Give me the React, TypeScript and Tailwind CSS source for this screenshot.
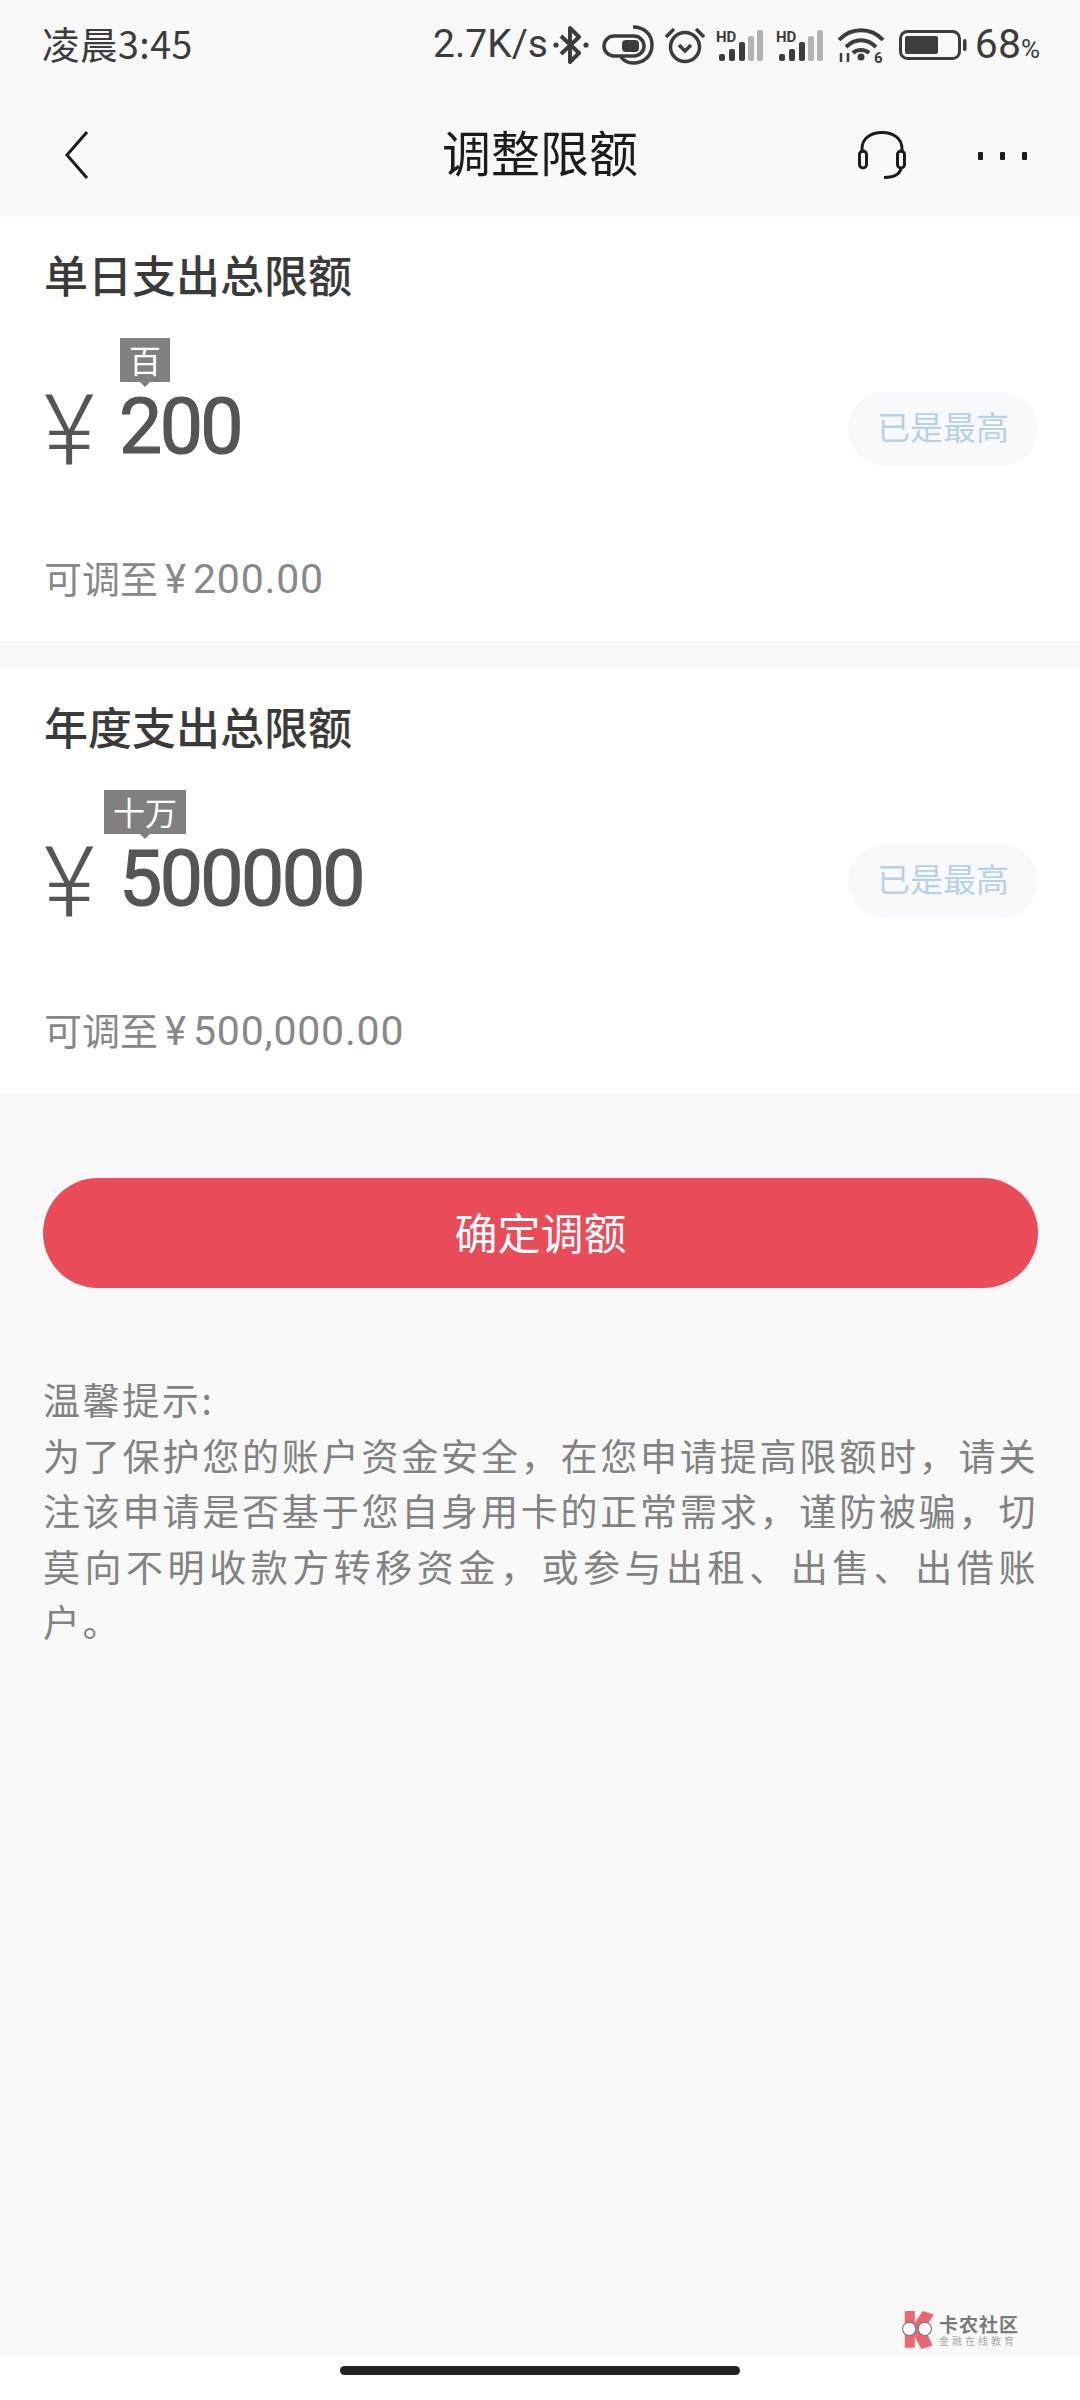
function Signal() {
  return (
    <svg width="50" height="32" viewBox="0 0 50 32" className="shrink-0">
      <text x="1" y="13" fontSize="15" fontWeight="700" fontFamily="Roboto, sans-serif" fill="#3c3c3c">HD</text>
      <rect x="4" y="25" width="6" height="7" rx="2" fill="#3c3c3c" />
      <rect x="14" y="20" width="6" height="12" rx="2" fill="#3c3c3c" />
      <rect x="24" y="13" width="6" height="19" rx="2" fill="#3c3c3c" />
      <rect x="33" y="7" width="6" height="25" rx="2" fill="#b3b3b3" />
      <rect x="42" y="1" width="6" height="31" rx="2" fill="#b3b3b3" />
    </svg>
  );
}

function StatusBar() {
  return (
    <div className="flex h-[90px] items-center justify-between pl-[42px] pr-[40px] text-[#3c3c3c]">
      <span className="mb-[5px] text-[37.5px] leading-none tracking-[0.5px]">凌晨3:45</span>
      <div className="flex items-center">
        <span className="mb-[2px] font-['Roboto',sans-serif] text-[39px] leading-none">2.7K/s</span>
        <svg width="36" height="38" viewBox="0 0 36 38" className="ml-[5px]" fill="none" stroke="#3c3c3c" strokeWidth="4">
          <path d="M8 10 L26 27 L17 36 V2 L26 11 L8 28" strokeLinejoin="round" />
          <circle cx="3" cy="19" r="2.6" fill="#3c3c3c" stroke="none" />
          <circle cx="33" cy="19" r="2.6" fill="#3c3c3c" stroke="none" />
        </svg>
        <svg width="52" height="40" viewBox="0 0 52 40" className="ml-[13px]" fill="none" stroke="#3c3c3c" strokeWidth="3.5">
          <rect x="2" y="11" width="40" height="20" rx="10" />
          <rect x="20" y="15" width="17" height="12" rx="4" fill="#3c3c3c" stroke="none" />
          <path d="M31 2 C43 2 50 10 50 20 C50 30 43 38 31 38 C26 38 22 36 19 32" />
        </svg>
        <svg width="42" height="38" viewBox="0 0 42 38" className="ml-[10px]" fill="none" stroke="#3c3c3c" strokeWidth="3.5">
          <circle cx="21" cy="21" r="14.5" />
          <path d="M15 19 L21 25 L27 19" />
          <path d="M2 11 L10 3 M40 11 L32 3" />
        </svg>
        <div className="ml-[9px] flex gap-[10px]">
          <Signal />
          <Signal />
        </div>
        <svg width="48" height="36" viewBox="0 0 48 36" className="ml-[12px]" fill="none" stroke="#3c3c3c" strokeWidth="4">
          <path d="M2 13 C14 0 34 0 46 13" />
          <path d="M9 20 C18 11 30 11 39 20" />
          <path d="M16 26 C20 22 28 22 32 26" />
          <circle cx="24" cy="30" r="3.5" fill="#3c3c3c" stroke="none" />
          <path d="M4 26 V35 M11 26 V35" strokeWidth="2.5" />
          <text x="37" y="36" fontSize="15" fontWeight="700" fontFamily="Roboto, sans-serif" fill="#3c3c3c" stroke="none">6</text>
        </svg>
        <svg width="68" height="30" viewBox="0 0 68 30" className="ml-[14px]" fill="none">
          <rect x="1.5" y="1.5" width="59" height="27" rx="7" stroke="#3c3c3c" strokeWidth="3" />
          <rect x="6" y="6" width="33" height="18" rx="2" fill="#3c3c3c" />
          <rect x="64" y="9" width="3.5" height="12" rx="1.7" fill="#3c3c3c" />
        </svg>
        <span className="mb-[2px] ml-[8px] font-['Roboto',sans-serif] text-[41px] leading-none">
          68<span className="text-[26px]">%</span>
        </span>
      </div>
    </div>
  );
}

function Header() {
  return (
    <div className="flex h-[127px] items-center justify-between pl-[64px] pr-[53px]">
      <svg width="26" height="52" viewBox="0 0 26 52" className="mt-[2px]" fill="none" stroke="#1c1c1c" strokeWidth="3">
        <path d="M23 3 L3 26 L23 49" />
      </svg>
      <span className="absolute left-0 right-0 mb-[6px] text-center text-[49px] leading-none text-[#1c1c1c]">调整限额</span>
      <div className="flex items-center gap-[72px]">
        <svg width="48" height="48" viewBox="0 0 48 48" className="mt-[2px]" fill="none" stroke="#1c1c1c" strokeWidth="3">
          <path d="M4 22 V18 C4 7 13 1.5 24 1.5 C35 1.5 44 7 44 18 V22" />
          <rect x="1.5" y="20" width="7" height="17" rx="3.5" />
          <rect x="39.5" y="20" width="7" height="17" rx="3.5" />
          <path d="M43 37 C42 43 36 46.5 26 46.5" />
        </svg>
        <div className="mt-[4px] flex gap-[17px]">
          <div className="h-[8px] w-[5px] rounded-[1px] bg-[#1c1c1c]" />
          <div className="h-[8px] w-[5px] rounded-[1px] bg-[#1c1c1c]" />
          <div className="h-[8px] w-[5px] rounded-[1px] bg-[#1c1c1c]" />
        </div>
      </div>
    </div>
  );
}

function LimitCard({ title, unit, unitW, amount, hint }: { title: string; unit: string; unitW: string; amount: string; hint: string }) {
  return (
    <section className="h-[424px] bg-white pl-[44px] pr-[42px] pt-[27px]">
      <h2 className="h-[60px] text-[44px] font-medium leading-[60px] text-[#3a3a3a]">{title}</h2>
      <div className="relative mt-[88px] flex h-[74px] items-center justify-between">
        <div
          className={`absolute left-[101px] top-[-54px] flex h-[44px] -translate-x-1/2 items-center justify-center bg-[#808080] pb-[3px] text-[32px] leading-none text-white ${unitW}`}
        >
          {unit}
          <div className="absolute bottom-[-5px] left-1/2 h-0 w-0 -translate-x-1/2 border-x-[5px] border-t-[5px] border-x-transparent border-t-[#808080]" />
        </div>
        <div className="flex items-center text-[#555555]">
          <span className="mb-[-6px] w-[75px] font-['Roboto',sans-serif] text-[98px] font-light leading-none">¥</span>
          <span className="mb-[4px] font-['Roboto',sans-serif] text-[77px] font-normal leading-none tracking-[-2.6px] [-webkit-text-stroke:1.2px_#555555]">{amount}</span>
        </div>
        <div className="flex h-[74px] w-[190px] items-center justify-center rounded-full bg-[#f7f9fc] pb-[4px] text-[33px] text-[#b7d1e8]">
          已是最高
        </div>
      </div>
      <p className="mt-[86px] text-[38px] leading-[50px] text-[#888888]">
        可调至
        <span className="ml-[7px] mr-[7px] font-['Roboto',sans-serif] text-[40px]">¥</span>
        <span className="font-['Roboto',sans-serif] text-[41px] tracking-[0.8px]">{hint}</span>
      </p>
    </section>
  );
}

export default function App() {
  return (
    <div className="relative flex h-[2400px] w-[1080px] flex-col overflow-hidden bg-[#f8f8f8] font-['Noto_Sans_CJK_SC',sans-serif]">
      <StatusBar />
      <Header />
      <LimitCard title="单日支出总限额" unit="百" unitW="w-[50px]" amount="200" hint="200.00" />
      <div className="h-[28px] shrink-0" />
      <LimitCard title="年度支出总限额" unit="十万" unitW="w-[82px]" amount="500000" hint="500,000.00" />
      <div className="flex-1 pl-[43px] pr-[42px] pt-[85px]">
        <button className="flex h-[110px] w-full items-center justify-center rounded-full bg-[#ea4b59] pb-[3px] text-[43px] text-white">
          确定调额
        </button>
        <div className="mt-[84px] text-justify text-[37px] leading-[55.5px] tracking-[2.6px] text-[#828282]">
          <p>温馨提示:</p>
          <p>为了保护您的账户资金安全，在您申请提高限额时，请关注该申请是否基于您自身用卡的正常需求，谨防被骗，切莫向不明收款方转移资金，或参与出租、出售、出借账户。</p>
        </div>
      </div>
      <div className="flex h-[44px] shrink-0 justify-center bg-white pt-[10px]">
        <div className="h-[9px] w-[400px] rounded-full bg-[#222222]" />
      </div>
      <div className="absolute left-[898px] top-[2310px] flex items-center gap-[3px]">
        <svg width="38" height="40" viewBox="0 0 34 36">
          <path d="M6 1 H15 V12 L22 1 L32 4 L24 17 L31 32 L21 35 L15 24 V34 H6 Z" fill="#ec6672" />
          <circle cx="10" cy="17" r="6" fill="#ffffff" stroke="#777777" strokeWidth="1" />
          <circle cx="24" cy="17" r="6" fill="#ffffff" stroke="#777777" strokeWidth="1" />
        </svg>
        <div className="flex flex-col">
          <span className="text-[19px] font-bold leading-[21px] tracking-[1px] text-[#7a7a7a]">卡农社区</span>
          <span className="text-[10px] leading-[14px] tracking-[3px] text-[#aaaaaa]">金融在线教育</span>
        </div>
      </div>
    </div>
  );
}
